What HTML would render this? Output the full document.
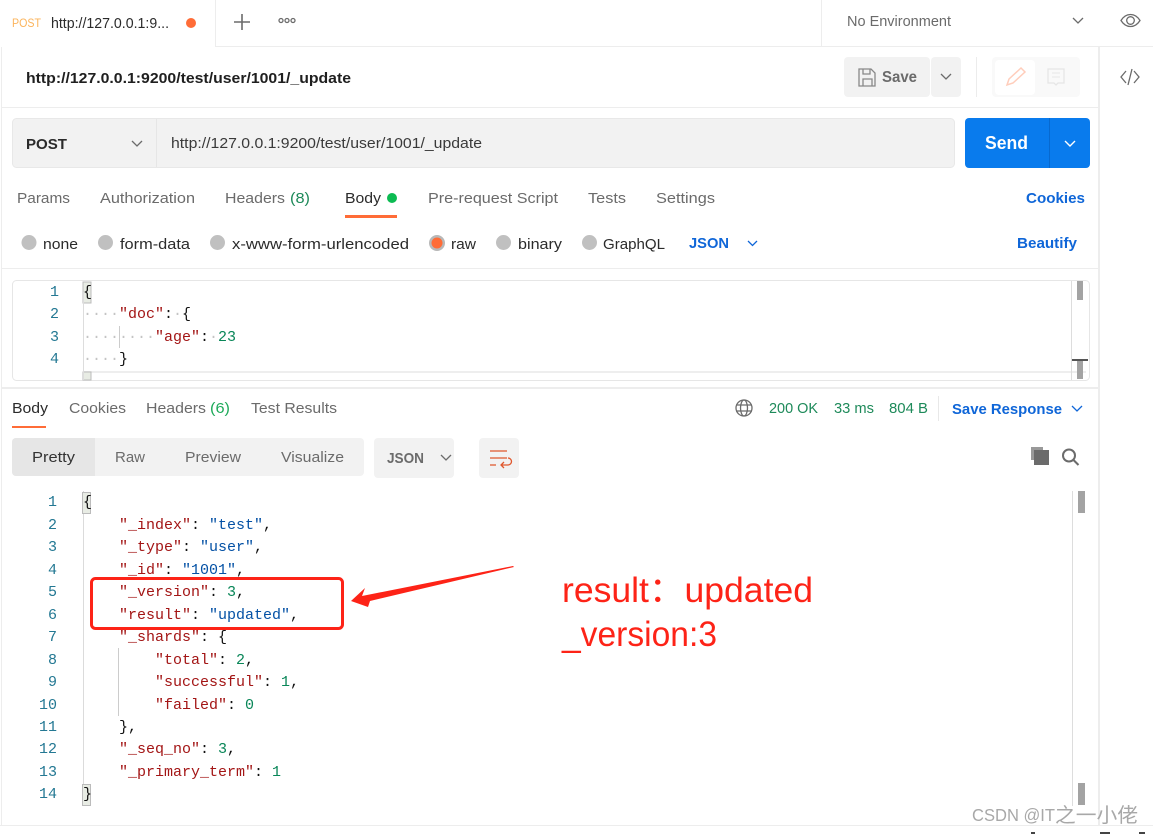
<!DOCTYPE html>
<html><head><meta charset="utf-8"><title>Postman</title>
<style>
html,body{margin:0;padding:0;background:#fff;width:1153px;height:834px;overflow:hidden}
svg{display:block}
text{font-family:"Liberation Sans","Noto Sans CJK SC",sans-serif;font-size:15px;fill:#6b6b6b}
.d{fill:#2b2b2b}.b{font-weight:bold}.bl{fill:#0f66d8;font-weight:bold}.g{fill:#1e8a5a}
.m{font-family:"Liberation Mono",monospace;font-size:15px;white-space:pre}
.n{fill:#237893}.k{fill:#a31515}.s{fill:#0451a5}.v{fill:#098658}.p{fill:#111}.w{fill:#c4c4c4}
.ic{fill:none;stroke:#6b6b6b;stroke-width:1.3}
</style></head><body>
<svg width="1153" height="834" viewBox="0 0 1153 834" xmlns="http://www.w3.org/2000/svg">
<rect width="1153" height="834" fill="#fff"/>
<g fill="#ededed">
<rect x="215" y="46" width="938" height="1"/>
<rect x="215" y="0" width="1" height="46"/><rect x="821" y="0" width="1" height="46"/>
<rect x="1" y="47" width="1" height="778"/>
<rect x="1098" y="47" width="2" height="778"/>
<rect x="2" y="107" width="1096" height="1"/><rect x="2" y="268" width="1096" height="1"/>
<rect x="2" y="387" width="1096" height="2"/><rect x="0" y="825" width="1153" height="1"/>
</g>
<!-- tab -->
<text x="12" y="27" textLength="29" lengthAdjust="spacingAndGlyphs" style="font-size:11.500px;fill:#fbb45c">POST</text>
<text x="51" y="28" textLength="118" lengthAdjust="spacingAndGlyphs" class="d">http://127.0.0.1:9...</text>
<circle cx="191" cy="23" r="5" fill="#ff6c37"/>
<path d="M242 14v16M234 22h16" fill="none" stroke="#6b6b6b" stroke-width="1.600"/>
<g class="ic"><circle cx="281" cy="20.500" r="2"/><circle cx="287" cy="20.500" r="2"/><circle cx="293" cy="20.500" r="2"/></g>
<text x="847" y="26" textLength="104" lengthAdjust="spacingAndGlyphs">No Environment</text>
<path d="M1073 18l5 5 5-5" class="ic"/>
<path d="M1121 20.500c5-8 14-8 19 0c-5 8-14 8-19 0z" class="ic"/><circle cx="1130.500" cy="20.500" r="3.800" class="ic"/>
<!-- title row -->
<text x="26" y="83" textLength="325" lengthAdjust="spacingAndGlyphs" class="d b" style="fill:#1f1f1f">http://127.0.0.1:9200/test/user/1001/_update</text>
<rect x="844" y="57" width="86" height="40" rx="4" fill="#f2f2f2"/>
<rect x="931" y="57" width="30" height="40" rx="4" fill="#f2f2f2"/>
<path d="M859 69h12l4 4v13h-16z M863 69v5h7v-5 M863 86v-7h9v7" fill="none" stroke="#888" stroke-width="1.300"/>
<text x="882" y="82" textLength="35" lengthAdjust="spacingAndGlyphs" class="b" style="font-size:15.500px">Save</text>
<path d="M941 74l5 5 5-5" class="ic"/>
<rect x="976" y="57" width="1" height="40" fill="#ececec"/>
<rect x="992" y="57" width="88" height="40" rx="4" fill="#f9f9f9"/>
<rect x="995" y="60" width="40" height="35" rx="4" fill="#fff"/>
<path d="M1007 85l2-6 12-11 4 4-12 11z" fill="none" stroke="#ffcdbb" stroke-width="1.500"/>
<path d="M1048 69h16v14h-6l-2 2-2-2h-6z" fill="none" stroke="#e6e6e6" stroke-width="1.300"/>
<path d="M1052 73h8M1052 77h8" stroke="#e6e6e6"/>
<path d="M1126 71l-5 6 5 6M1134 71l5 6-5 6M1132 69l-4 16" class="ic"/>
<!-- url row -->
<rect x="12.500" y="118.500" width="942" height="49" rx="4" fill="#f2f2f2" stroke="#e8e8e8"/>
<rect x="156" y="119" width="1" height="48" fill="#e6e6e6"/>
<text x="26" y="149" textLength="41" lengthAdjust="spacingAndGlyphs" class="d b">POST</text>
<path d="M132 141l5 5 5-5" class="ic"/>
<text x="171" y="148" textLength="311" lengthAdjust="spacingAndGlyphs" class="d" style="fill:#3a3a3a">http://127.0.0.1:9200/test/user/1001/_update</text>
<rect x="965" y="118" width="125" height="50" rx="4" fill="#097bed"/>
<rect x="1049" y="118" width="1" height="50" fill="#0669d0"/>
<text x="985" y="149" textLength="43" lengthAdjust="spacingAndGlyphs" class="b" style="font-size:18px;fill:#fff">Send</text>
<path d="M1065 141l5 5 5-5" fill="none" stroke="#fff" stroke-width="1.400"/>
<!-- req tabs -->
<text x="17" y="203" textLength="53" lengthAdjust="spacingAndGlyphs">Params</text>
<text x="100" y="203" textLength="95" lengthAdjust="spacingAndGlyphs">Authorization</text>
<text x="225" y="203" textLength="60" lengthAdjust="spacingAndGlyphs">Headers</text>
<text x="290" y="203" textLength="20" lengthAdjust="spacingAndGlyphs" style="fill:#1e8a5a">(8)</text>
<text x="345" y="203" textLength="36" lengthAdjust="spacingAndGlyphs" class="d">Body</text>
<circle cx="392" cy="198" r="5" fill="#0cbb52"/>
<rect x="345" y="215" width="52" height="3" fill="#ff6c37"/>
<text x="428" y="203" textLength="130" lengthAdjust="spacingAndGlyphs">Pre-request Script</text>
<text x="588" y="203" textLength="38" lengthAdjust="spacingAndGlyphs">Tests</text>
<text x="656" y="203" textLength="59" lengthAdjust="spacingAndGlyphs">Settings</text>
<text x="1026" y="203" textLength="59" lengthAdjust="spacingAndGlyphs" class="bl">Cookies</text>
<!-- radios -->
<g fill="#c0c0c0"><circle cx="29" cy="242.500" r="7.500"/><circle cx="105.500" cy="242.500" r="7.500"/><circle cx="217.500" cy="242.500" r="7.500"/><circle cx="503.500" cy="242.500" r="7.500"/><circle cx="589.500" cy="242.500" r="7.500"/></g>
<circle cx="437" cy="243" r="8" fill="#b8b8b8"/><circle cx="437" cy="243" r="5.500" fill="#ff6c37"/>
<g class="d"><text class="d" x="43" y="249" textLength="35" lengthAdjust="spacingAndGlyphs">none</text>
<text class="d" x="120" y="249" textLength="70" lengthAdjust="spacingAndGlyphs">form-data</text>
<text class="d" x="232" y="249" textLength="177" lengthAdjust="spacingAndGlyphs">x-www-form-urlencoded</text>
<text class="d" x="451" y="249" textLength="25" lengthAdjust="spacingAndGlyphs">raw</text>
<text class="d" x="518" y="249" textLength="44" lengthAdjust="spacingAndGlyphs">binary</text>
<text class="d" x="603" y="249" textLength="62" lengthAdjust="spacingAndGlyphs">GraphQL</text></g>
<text x="689" y="248" textLength="40" lengthAdjust="spacingAndGlyphs" class="bl">JSON</text>
<path d="M748 241l4.500 4.500 4.500-4.500" fill="none" stroke="#0f66d8" stroke-width="1.300"/>
<text x="1017" y="248" textLength="60" lengthAdjust="spacingAndGlyphs" class="bl">Beautify</text>
<!-- req editor -->
<rect x="12.500" y="280.500" width="1077" height="100" rx="4" fill="#fff" stroke="#e6e6e6"/>
<rect x="83" y="371" width="1003" height="2" fill="#eee"/>
<rect x="83" y="282" width="8" height="21" fill="#e8ece4" stroke="#bbb"/>
<rect x="83" y="372" width="8" height="8" fill="#e8ece4" stroke="#bbb"/>
<rect x="83" y="292" width="1" height="88" fill="#ddd"/>
<rect x="119" y="326" width="1" height="22" fill="#ccc"/>
<rect x="1071" y="281" width="1" height="99" fill="#ddd"/>
<rect x="1077" y="281" width="6" height="19" fill="#a3a3a3"/>
<rect x="1077" y="360" width="6" height="19" fill="#a3a3a3"/>
<rect x="1072" y="359" width="16" height="2" fill="#555"/>
<g transform="translate(0,-1)">
<text class="m n" x="50" y="297">1</text><text class="m n" x="50" y="319">2</text><text class="m n" x="50" y="342">3</text><text class="m n" x="50" y="364">4</text>
<text class="m p" x="83" y="297">{</text>
<text class="m w" x="83" y="319">····</text><text class="m k" x="119" y="319">"doc"</text><text class="m p" x="164" y="319">:</text><text class="m w" x="173" y="319">·</text><text class="m p" x="182" y="319">{</text>
<text class="m w" x="83" y="342">········</text><text class="m k" x="155" y="342">"age"</text><text class="m p" x="200" y="342">:</text><text class="m w" x="209" y="342">·</text><text class="m v" x="218" y="342">23</text>
<text class="m w" x="83" y="364">····</text><text class="m p" x="119" y="364">}</text>
</g>
<!-- response tabs -->
<text x="12" y="413" textLength="36" lengthAdjust="spacingAndGlyphs" class="d">Body</text>
<rect x="12" y="426" width="34" height="2" fill="#ff6c37"/>
<text x="69" y="413" textLength="57" lengthAdjust="spacingAndGlyphs">Cookies</text>
<text x="146" y="413" textLength="60" lengthAdjust="spacingAndGlyphs">Headers</text>
<text x="210" y="413" textLength="20" lengthAdjust="spacingAndGlyphs" style="fill:#1eaa5a">(6)</text>
<text x="251" y="413" textLength="86" lengthAdjust="spacingAndGlyphs">Test Results</text>
<g class="ic" stroke-width="1"><circle cx="744" cy="408" r="8"/><ellipse cx="744" cy="408" rx="3.500" ry="8"/><path d="M736 405h16M736 411h16"/></g>
<text x="769" y="413" textLength="49" lengthAdjust="spacingAndGlyphs" class="g">200 OK</text>
<text x="834" y="413" textLength="40" lengthAdjust="spacingAndGlyphs" class="g">33 ms</text>
<text x="889" y="413" textLength="39" lengthAdjust="spacingAndGlyphs" class="g">804 B</text>
<rect x="938" y="396" width="1" height="25" fill="#e8e8e8"/>
<text x="952" y="414" textLength="110" lengthAdjust="spacingAndGlyphs" class="bl">Save Response</text>
<path d="M1072 406l5 5 5-5" fill="none" stroke="#0f66d8" stroke-width="1.300"/>
<!-- format bar -->
<rect x="12" y="438" width="352" height="38" rx="4" fill="#f2f2f2"/>
<path d="M16 438h79v38h-79a4 4 0 0 1-4-4v-30a4 4 0 0 1 4-4z" fill="#e6e6e6"/>
<text x="32" y="462" textLength="43" lengthAdjust="spacingAndGlyphs" class="d" style="fill:#333">Pretty</text>
<text x="115" y="462" textLength="30" lengthAdjust="spacingAndGlyphs">Raw</text>
<text x="185" y="462" textLength="56" lengthAdjust="spacingAndGlyphs">Preview</text>
<text x="281" y="462" textLength="63" lengthAdjust="spacingAndGlyphs">Visualize</text>
<rect x="374" y="438" width="80" height="40" rx="4" fill="#f2f2f2"/>
<text x="387" y="463" textLength="37" lengthAdjust="spacingAndGlyphs" class="b">JSON</text>
<path d="M441 455l5 5 5-5" class="ic"/>
<rect x="479" y="438" width="40" height="40" rx="4" fill="#f2f2f2"/>
<path d="M490 451h17M490 458h17M490 465h6M508 458a3.500 3.500 0 0 1 0 7h-7M504 462l-3 3 3 3" fill="none" stroke="#e0572d" stroke-width="1.300"/>
<rect x="1031" y="447" width="12" height="13" fill="#999"/><rect x="1034" y="450" width="15" height="15" fill="#6b6b6b"/>
<circle cx="1069" cy="455.500" r="6" fill="none" stroke="#6b6b6b" stroke-width="2"/><path d="M1073.500 460l5 5" stroke="#6b6b6b" stroke-width="2"/>
<!-- response editor -->
<rect x="83" y="491" width="1" height="315" fill="#ccc" opacity=".7"/>
<rect x="82.500" y="492.500" width="8" height="21" fill="#e8ece4" stroke="#bbb"/>
<rect x="82.500" y="784.500" width="8" height="21" fill="#e8ece4" stroke="#bbb"/>
<rect x="118" y="648" width="1" height="68" fill="#ccc"/>
<rect x="1072" y="491" width="1" height="315" fill="#ddd"/>
<rect x="1078" y="491" width="7" height="22" fill="#a3a3a3"/>
<rect x="1078" y="783" width="7" height="22" fill="#a3a3a3"/>
<g transform="translate(0,-1)">
<text class="m n" x="48" y="507">1</text><text class="m n" x="48" y="530">2</text><text class="m n" x="48" y="552">3</text><text class="m n" x="48" y="575">4</text><text class="m n" x="48" y="597">5</text><text class="m n" x="48" y="620">6</text><text class="m n" x="48" y="642">7</text><text class="m n" x="48" y="665">8</text><text class="m n" x="48" y="687">9</text><text class="m n" x="39" y="710">10</text><text class="m n" x="39" y="732">11</text><text class="m n" x="39" y="754">12</text><text class="m n" x="39" y="777">13</text><text class="m n" x="39" y="799">14</text>
<text class="m p" x="83" y="507">{</text>
<text class="m p" x="119" y="530"><tspan class="k">"_index"</tspan>: <tspan class="s">"test"</tspan>,</text>
<text class="m p" x="119" y="552"><tspan class="k">"_type"</tspan>: <tspan class="s">"user"</tspan>,</text>
<text class="m p" x="119" y="575"><tspan class="k">"_id"</tspan>: <tspan class="s">"1001"</tspan>,</text>
<text class="m p" x="119" y="597"><tspan class="k">"_version"</tspan>: <tspan class="v">3</tspan>,</text>
<text class="m p" x="119" y="620"><tspan class="k">"result"</tspan>: <tspan class="s">"updated"</tspan>,</text>
<text class="m p" x="119" y="642"><tspan class="k">"_shards"</tspan>: {</text>
<text class="m p" x="155" y="665"><tspan class="k">"total"</tspan>: <tspan class="v">2</tspan>,</text>
<text class="m p" x="155" y="687"><tspan class="k">"successful"</tspan>: <tspan class="v">1</tspan>,</text>
<text class="m p" x="155" y="710"><tspan class="k">"failed"</tspan>: <tspan class="v">0</tspan></text>
<text class="m p" x="119" y="732">},</text>
<text class="m p" x="119" y="754"><tspan class="k">"_seq_no"</tspan>: <tspan class="v">3</tspan>,</text>
<text class="m p" x="119" y="777"><tspan class="k">"_primary_term"</tspan>: <tspan class="v">1</tspan></text>
<text class="m p" x="83" y="799">}</text>
</g>
<!-- annotations -->
<rect x="91.500" y="578.500" width="251" height="50" rx="4" fill="none" stroke="#fd2317" stroke-width="3"/>
<polygon points="351,601 365,588 362,596 513,566 514,567 370,601 368,607" fill="#fd2317"/>
<text x="562" y="602" textLength="251" lengthAdjust="spacingAndGlyphs" style="font-size:35px;fill:#fd2317">result：updated</text>
<text x="562" y="646" textLength="155" lengthAdjust="spacingAndGlyphs" style="font-size:35px;fill:#fd2317">_version:3</text>
<text x="972" y="821" textLength="83" lengthAdjust="spacingAndGlyphs" style="font-size:17.500px;fill:#a8a8a8">CSDN @IT</text>
<text x="1055" y="822" textLength="83" lengthAdjust="spacingAndGlyphs" style="font-size:20px;fill:#a8a8a8">之一小佬</text>
<g fill="#444"><rect x="1031" y="832" width="4" height="2"/><rect x="1100" y="832" width="10" height="2"/><rect x="1139" y="832" width="6" height="2"/></g>
</svg>
</body></html>
